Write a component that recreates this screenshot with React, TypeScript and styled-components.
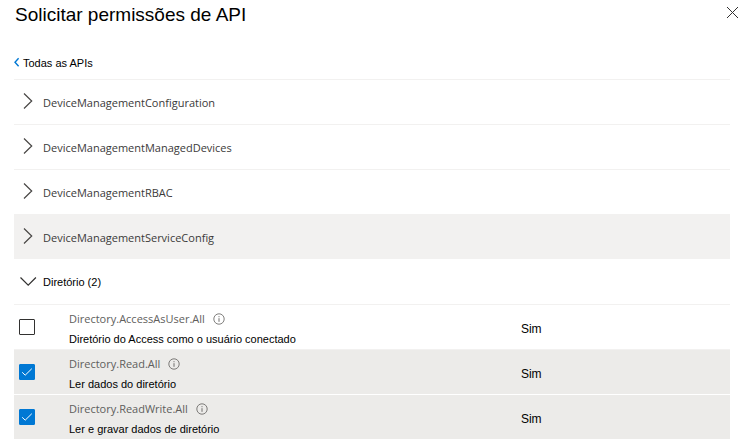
import React, { useState } from "react";
import styled, { createGlobalStyle } from "styled-components";

const GlobalStyle = createGlobalStyle`
  * { box-sizing: border-box; }
  body {
    margin: 0;
    background: #ffffff;
    color: #000000;
    font-family: "Liberation Sans", Arial, sans-serif;
    font-size: 11px;
    line-height: 16px;
  }
`;

const Panel = styled.main`
  display: flex;
  flex-direction: column;
`;

const Header = styled.header`
  display: flex;
  justify-content: space-between;
  align-items: flex-start;
  padding: 2px 4px 0 15px;
`;

const Title = styled.h1`
  margin: 0;
  font-size: 19px;
  line-height: 26px;
  font-weight: 400;
`;

const CloseButton = styled.button`
  display: flex;
  padding: 4px 0;
  border: 0;
  background: none;
  cursor: pointer;
`;

const Content = styled.div`
  padding: 0 13px 0 14px;
`;

const BackLink = styled.a`
  display: flex;
  align-items: center;
  gap: 3px;
  width: fit-content;
  margin: 27px 0 8px;
  color: #000000;
  text-decoration: none;
`;

const GroupList = styled.div`
  display: flex;
  flex-direction: column;
`;

const GroupButton = styled.button<{ $highlighted?: boolean; $open?: boolean }>`
  display: flex;
  align-items: center;
  gap: 6px;
  height: 45px;
  padding: 0 6px 2px;
  border: 0;
  border-top: 1px solid ${(p) => (p.$open ? "#ffffff" : "#f2f1f0")};
  background: ${(p) => (p.$highlighted ? "#f2f1f0" : "#ffffff")};
  color: ${(p) => (p.$open ? "#000000" : "#3b3a39")};
  font-family: ${(p) =>
    p.$open ? `"Liberation Sans", Arial, sans-serif` : `"Open Sans", "Segoe UI", sans-serif`};
  font-size: 11px;
  line-height: 16px;
  text-align: left;
  cursor: pointer;
`;

const GroupLabel = styled.span<{ $open?: boolean }>`
  padding-top: ${(p) => (p.$open ? "2px" : "4px")};
`;

const PermissionTable = styled.table`
  width: 100%;
  border-collapse: separate;
  border-spacing: 0;
  table-layout: fixed;
`;

const CheckColumn = styled.col`
  width: 55px;
`;

const ConsentColumn = styled.col`
  width: 29.2%;
`;

const Cell = styled.td`
  height: 45px;
  padding: 0;
  border-top: 1px solid #f2f1f0;
  vertical-align: middle;
`;

const PermissionRow = styled.tr<{ $checked: boolean }>`
  background: ${(p) => (p.$checked ? "#ecebe9" : "#ffffff")};
  &:last-child > td {
    border-top-color: #ffffff;
  }
`;

const DetailsCell = styled(Cell)`
  padding-top: 4px;
`;

const ConsentCell = styled(Cell)`
  padding-top: 4px;
  font-size: 12px;
`;

const CheckLabel = styled.label`
  display: grid;
  width: 16px;
  margin-left: 5px;
  > * { grid-area: 1 / 1; }
`;

const Checkbox = styled.input`
  appearance: none;
  width: 16px;
  height: 16px;
  margin: 0;
  border: 1px solid #323130;
  border-radius: 1px;
  background: #ffffff;
  cursor: pointer;
  &:checked {
    border-color: #0078d4;
    background: #0078d4;
  }
`;

const CheckMark = styled.svg`
  pointer-events: none;
`;

const PermissionName = styled.div`
  display: flex;
  align-items: center;
  gap: 8px;
  height: 20px;
  color: #605e5c;
  font-family: "Open Sans", "Segoe UI", sans-serif;
`;

const Description = styled.div`
  height: 20px;
  line-height: 20px;
`;

function RightChevron() {
  return (
    <svg width="17" height="16" viewBox="0 0 17 16" fill="none" stroke="#484644" strokeWidth="1.2" aria-hidden="true">
      <path d="M4 .5 11.7 8 4 15.5" />
    </svg>
  );
}

function DownChevron() {
  return (
    <svg width="17" height="16" viewBox="0 0 17 16" fill="none" stroke="#323130" strokeWidth="1.2" aria-hidden="true">
      <path d="M.5 4.5 8.2 12.2 15.9 4.5" />
    </svg>
  );
}

function InfoIcon() {
  return (
    <svg width="12" height="12" viewBox="0 0 12 12" fill="none" stroke="#605e5c" aria-hidden="true">
      <circle cx="6" cy="6" r="5.2" strokeWidth=".8" />
      <path d="M6 5.2V8.8M6 3.2V4.2" strokeWidth=".9" />
    </svg>
  );
}

const groups = [
  { name: "DeviceManagementConfiguration" },
  { name: "DeviceManagementManagedDevices" },
  { name: "DeviceManagementRBAC" },
  { name: "DeviceManagementServiceConfig", highlighted: true },
];

const permissions = [
  { name: "Directory.AccessAsUser.All", description: "Diretório do Access como o usuário conectado" },
  { name: "Directory.Read.All", description: "Ler dados do diretório" },
  { name: "Directory.ReadWrite.All", description: "Ler e gravar dados de diretório" },
];

export default function App() {
  const [selected, setSelected] = useState([false, true, true]);
  const toggle = (index: number) =>
    setSelected((current) => current.map((value, i) => (i === index ? !value : value)));

  return (
    <Panel>
      <GlobalStyle />
      <Header>
        <Title>Solicitar permissões de API</Title>
        <CloseButton type="button" aria-label="Fechar">
          <svg width="13" height="13" viewBox="0 0 13 13" fill="none" stroke="#323130" aria-hidden="true">
            <path d="M1 1 12 12M12 1 1 12" />
          </svg>
        </CloseButton>
      </Header>
      <Content>
        <BackLink href="#apis">
          <svg width="6" height="12" viewBox="0 0 6 12" fill="none" stroke="#0078d4" strokeWidth="1.4" aria-hidden="true">
            <path d="M4.6 1.2 1 5.2 4.6 9.2" />
          </svg>
          Todas as APIs
        </BackLink>
        <GroupList>
          {groups.map((group) => (
            <GroupButton key={group.name} type="button" aria-expanded={false} $highlighted={group.highlighted}>
              <RightChevron />
              <GroupLabel>{group.name}</GroupLabel>
            </GroupButton>
          ))}
          <GroupButton type="button" aria-expanded={true} $open>
            <DownChevron />
            <GroupLabel $open>Diretório (2)</GroupLabel>
          </GroupButton>
        </GroupList>
        <PermissionTable>
          <colgroup>
            <CheckColumn />
            <col />
            <ConsentColumn />
          </colgroup>
          <tbody>
            {permissions.map((permission, index) => (
              <PermissionRow key={permission.name} $checked={selected[index]}>
                <Cell>
                  <CheckLabel>
                    <Checkbox
                      type="checkbox"
                      aria-label={permission.name}
                      checked={selected[index]}
                      onChange={() => toggle(index)}
                    />
                    {selected[index] && (
                      <CheckMark width="16" height="16" viewBox="0 0 16 16" fill="none" stroke="#ffffff" aria-hidden="true">
                        <path d="M3.2 8.3 6.2 11.2 12.8 4.7" />
                      </CheckMark>
                    )}
                  </CheckLabel>
                </Cell>
                <DetailsCell>
                  <PermissionName>
                    {permission.name}
                    <InfoIcon />
                  </PermissionName>
                  <Description>{permission.description}</Description>
                </DetailsCell>
                <ConsentCell>Sim</ConsentCell>
              </PermissionRow>
            ))}
          </tbody>
        </PermissionTable>
      </Content>
    </Panel>
  );
}
